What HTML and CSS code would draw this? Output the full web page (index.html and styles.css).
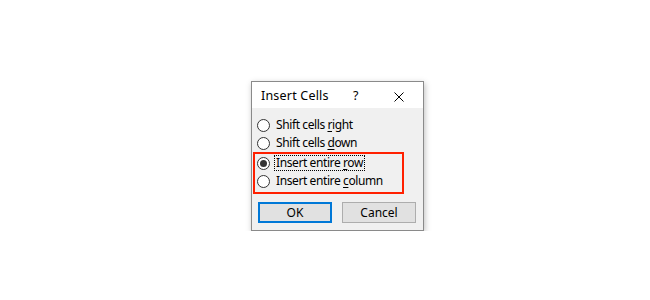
FILE: index.html
```html
<!DOCTYPE html>
<html lang="en">
<head>
    <meta charset="UTF-8">
    <title>Insert Cells</title>
    <link rel="stylesheet" href="styles.css">
</head>
<body>
    <div class="dialog">
        <div class="titlebar">
            <span class="title">Insert Cells</span>
            <span class="help">?</span>
            <span class="close">
                <svg width="10" height="10" viewBox="0 0 10 10">
                    <path d="M0.5 0.5 L9.5 9.5 M9.5 0.5 L0.5 9.5" stroke="#000" stroke-width="1" fill="none"/>
                </svg>
            </span>
        </div>

        <div class="content">
            <div class="option">
                <span class="radio"></span>
                <span class="label">Shift cells <u>r</u>ight</span>
            </div>
            <div class="option">
                <span class="radio"></span>
                <span class="label">Shift cells <u>d</u>own</span>
            </div>
            <div class="highlight">
                <div class="option">
                    <span class="radio checked"></span>
                    <span class="label focused">Insert entire <u>r</u>ow</span>
                </div>
                <div class="option">
                    <span class="radio"></span>
                    <span class="label">Insert entire <u>c</u>olumn</span>
                </div>
            </div>

            <div class="buttons">
                <div class="button default">OK</div>
                <div class="button">Cancel</div>
            </div>
        </div>
    </div>
</body>
</html>
```

FILE: styles.css
```css
body {
    margin: 0;
    padding: 81px 0 0 251px;
    background: #fff;
    font-family: "Noto Sans", "Open Sans", sans-serif;
    font-size: 12px;
    color: #000;
}
.dialog {
    width: 171px;
    border: 1px solid #8a8a8a;
    background: #f0f0f0;
    box-shadow: 1px 2px 6px rgba(0,0,0,0.25);
}
.titlebar {
    height: 26px;
    background: #fff;
    display: flex;
    align-items: center;
    padding-left: 9px;
}
.title {
    width: 92px;
    font-size: 12.5px;
    letter-spacing: 0.2px;
}
.help {
    width: 41px;
    font-size: 12.5px;
}
.close {
    display: flex;
    padding-top: 3px;
}
.content {
    padding: 8px 0 7px 0;
}
.option {
    height: 18px;
    display: flex;
    align-items: center;
    padding-left: 5px;
}
.highlight {
    width: 147px;
    margin-left: 1px;
    border: 2px solid #ff2000;
    padding-bottom: 2px;
}
.highlight .option {
    padding-left: 2px;
}
.radio {
    width: 11px;
    height: 11px;
    border: 1px solid #333;
    border-radius: 50%;
    background: #fff;
    display: flex;
    align-items: center;
    justify-content: center;
    margin-right: 5px;
    flex-shrink: 0;
}
.radio.checked::after {
    content: "";
    width: 7px;
    height: 7px;
    border-radius: 50%;
    background: #333;
}
.label {
    letter-spacing: -0.4px;
    line-height: 14px;
    padding: 0 1px;
    margin-left: -1px;
    border: 1px dotted transparent;
}
.label.focused {
    border-color: #000;
}
.label u {
    text-underline-offset: 2px;
}
.buttons {
    display: flex;
    gap: 10px;
    padding-left: 6px;
    margin-top: 8px;
}
.button {
    width: 72px;
    height: 19px;
    border: 1px solid #adadad;
    background: #e1e1e1;
    display: flex;
    align-items: center;
    justify-content: center;
}
.button.default {
    width: 70px;
    height: 17px;
    border: 2px solid #0078d7;
}
```
